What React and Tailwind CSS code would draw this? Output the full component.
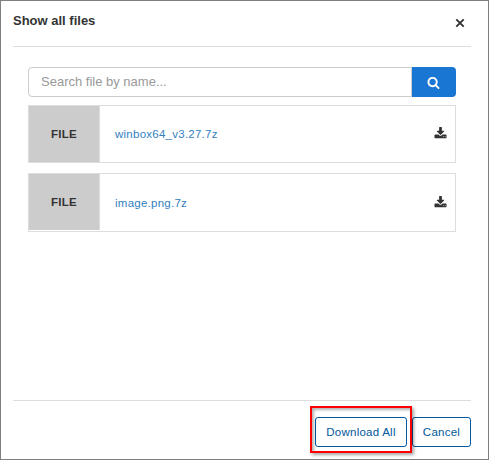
const files = [
  { name: "winbox64_v3.27.7z", box: "h-[58px]", link: "pt-0" },
  { name: "image.png.7z", box: "h-[59px] mt-[10px]", link: "pt-px" },
];

function SearchIcon() {
  return (
    <svg width="13" height="13" viewBox="0 0 1792 1792" fill="currentColor" aria-hidden="true">
      <path d="M1216 832q0-185-131.5-316.5t-316.5-131.5-316.5 131.5-131.5 316.5 131.5 316.5 316.5 131.5 316.5-131.5 131.5-316.5zm512 832q0 52-38 90t-90 38q-54 0-90-38l-343-342q-179 124-399 124-143 0-273.5-55.5t-225-150-150-225-55.5-273.5 55.5-273.5 150-225 225-150 273.5-55.5 273.5 55.5 225 150 150 225 55.5 273.5q0 220-124 399l343 343q37 37 37 90z" />
    </svg>
  );
}

function DownloadIcon() {
  return (
    <svg width="13" height="13" viewBox="0 0 1792 1792" fill="currentColor" aria-hidden="true">
      <path d="M1344 1344q0-26-19-45t-45-19-45 19-19 45 19 45 45 19 45-19 19-45zm256 0q0-26-19-45t-45-19-45 19-19 45 19 45 45 19 45-19 19-45zm128-224v320q0 40-28 68t-68 28h-1472q-40 0-68-28t-28-68v-320q0-40 28-68t68-28h465l135 136q58 56 136 56t136-56l136-136h464q40 0 68 28t28 68zm-325-569q17 41-14 70l-448 448q-18 19-45 19t-45-19l-448-448q-31-29-14-70 17-39 59-39h256v-448q0-26 19-45t45-19h256q26 0 45 19t19 45v448h256q42 0 59 39z" />
    </svg>
  );
}

export default function App() {
  return (
    <div className="flex h-[460px] w-[489px] flex-col overflow-hidden border border-[#7f7f7f] bg-white pr-[17px] pl-3 font-['Liberation_Sans',Arial,sans-serif] text-[13px] text-[#333]">
      <header className="flex h-[46px] shrink-0 justify-between border-b border-[#ddd] pr-[6px]">
        <h1 className="pt-3 text-[13px] leading-4 font-bold">Show all files</h1>
        <button aria-label="Close" className="mt-[17px] h-[10px] w-[10px]">
          <svg width="10" height="10" viewBox="0 0 10 10" fill="none" stroke="#333" strokeWidth="1.9">
            <path d="M1.3 1.3 8.7 8.7M8.7 1.3 1.3 8.7" />
          </svg>
        </button>
      </header>
      <main className="flex flex-1 flex-col px-[15px] pt-5">
        <div className="flex h-[30px] w-[428px]">
          <input
            placeholder="Search file by name..."
            className="w-[384px] rounded-l-[4px] border border-[#ccc] px-3 text-[13px] outline-none placeholder:text-[#999]"
          />
          <button aria-label="Search" className="flex w-[44px] items-center justify-center rounded-r-[4px] bg-[#1976d2] pr-px text-white">
            <SearchIcon />
          </button>
        </div>
        <ul className="mt-2 flex w-[428px] flex-col">
          {files.map((file) => (
            <li key={file.name} className={`flex border border-[#ddd] ${file.box}`}>
              <div className="flex h-[56px] w-[71px] items-center justify-center border-r border-[#ddd] bg-[#ccc] pt-[2px] text-[11.5px] font-bold tracking-[0.25px]">
                FILE
              </div>
              <div className={`flex flex-1 items-center justify-between pr-[8px] pl-[15px] ${file.link}`}>
                <a className="pt-px text-[11.5px] tracking-[0.25px] text-[#337fc0]">{file.name}</a>
                <span className="mb-[2px]">
                  <DownloadIcon />
                </span>
              </div>
            </li>
          ))}
        </ul>
      </main>
      <footer className="flex h-[59px] shrink-0 justify-end gap-[5px] border-t border-[#ddd] pt-4">
        <div className="relative">
          <button className="h-[30px] w-[92px] rounded-[3px] border border-[#01579b] pt-px text-[11.5px] tracking-[0.25px] text-[#01579b]">Download All</button>
          <span className="pointer-events-none absolute -top-[11px] -left-[5px] h-[47px] w-[102px] border-2 border-[#f00] shadow-[2px_2px_3px_rgba(0,0,0,0.35),inset_2px_2px_3px_rgba(0,0,0,0.3)]" />
        </div>
        <button className="h-[30px] w-[59px] rounded-[3px] border border-[#01579b] pt-px text-[11.5px] tracking-[0.25px] text-[#01579b]">Cancel</button>
      </footer>
    </div>
  );
}
